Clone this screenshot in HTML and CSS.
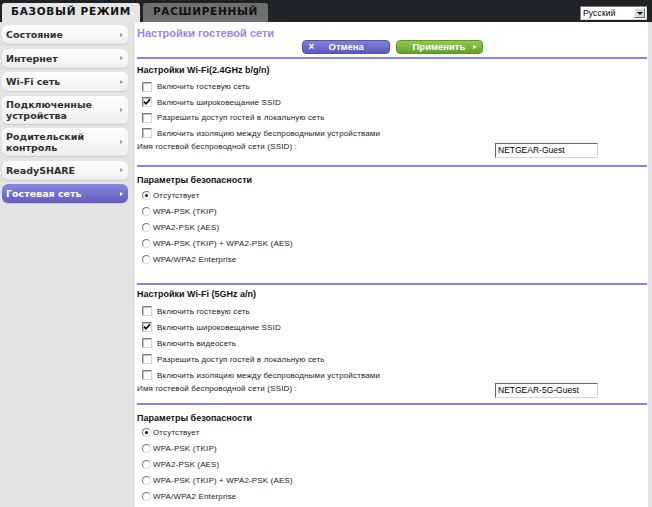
FILE: index.html
```html
<!DOCTYPE html>
<html lang="ru">
<head>
<meta charset="utf-8">
<title>Гостевая сеть</title>
<link rel="stylesheet" href="styles.css">
</head>
<body>
<header class="topbar">
  <div class="tabs">
    <div class="tab tab-active">БАЗОВЫЙ РЕЖИМ</div>
    <div class="tab">РАСШИРЕННЫЙ</div>
  </div>
  <div class="lang">
    <span class="lang-value">Русский</span>
    <span class="lang-btn"><svg width="6" height="3" viewBox="0 0 6 3"><path d="M0 0h6L3 3z" fill="#000"/></svg></span>
  </div>
</header>
<div class="layout">
  <nav class="sidebar">
    <div class="nav-item"><span>Состояние</span><span class="arrow"></span></div>
    <div class="nav-item"><span>Интернет</span><span class="arrow"></span></div>
    <div class="nav-item"><span>Wi-Fi сеть</span><span class="arrow"></span></div>
    <div class="nav-item two"><span>Подключенные<br>устройства</span><span class="arrow"></span></div>
    <div class="nav-item two"><span>Родительский<br>контроль</span><span class="arrow"></span></div>
    <div class="nav-item"><span>ReadySHARE</span><span class="arrow"></span></div>
    <div class="nav-item active"><span>Гостевая сеть</span><span class="arrow"></span></div>
  </nav>
  <main class="main">
    <div class="page-head">
      <h1 class="page-title">Настройки гостевой сети</h1>
      <div class="actions">
        <span class="btn btn-cancel"><span class="btn-x">×</span>Отмена</span>
        <span class="btn btn-apply">Применить<span class="btn-tri"></span></span>
      </div>
    </div>

    <section class="sec sec-1">
      <h2 class="sec-title">Настройки Wi-Fi(2.4GHz b/g/n)</h2>
      <div class="row"><span class="cb"></span>Включить гостевую сеть</div>
      <div class="row"><span class="cb"><svg width="8" height="8" viewBox="0 0 8 8"><path d="M1 3.6 L3 5.8 L7 1.2" fill="none" stroke="#000" stroke-width="1.6"/></svg></span>Включить широковещание SSID</div>
      <div class="row"><span class="cb"></span>Разрешить доступ гостей в локальную сеть</div>
      <div class="row"><span class="cb"></span>Включить изоляцию между беспроводными устройствами</div>
      <div class="ssid"><span class="ssid-label">Имя гостевой беспроводной сети (SSID) :</span><span class="field">NETGEAR-Guest</span></div>
    </section>

    <section class="sec sec-2">
      <h2 class="sec-title">Параметры безопасности</h2>
      <div class="row"><span class="rb on"></span>Отсутствует</div>
      <div class="row"><span class="rb"></span>WPA-PSK (TKIP)</div>
      <div class="row"><span class="rb"></span>WPA2-PSK (AES)</div>
      <div class="row"><span class="rb"></span>WPA-PSK (TKIP) + WPA2-PSK (AES)</div>
      <div class="row"><span class="rb"></span>WPA/WPA2 Enterprise</div>
    </section>

    <section class="sec sec-3">
      <h2 class="sec-title">Настройки Wi-Fi (5GHz a/n)</h2>
      <div class="row"><span class="cb"></span>Включить гостевую сеть</div>
      <div class="row"><span class="cb"><svg width="8" height="8" viewBox="0 0 8 8"><path d="M1 3.6 L3 5.8 L7 1.2" fill="none" stroke="#000" stroke-width="1.6"/></svg></span>Включить широковещание SSID</div>
      <div class="row"><span class="cb"></span>Включить видеосеть</div>
      <div class="row"><span class="cb"></span>Разрешить доступ гостей в локальную сеть</div>
      <div class="row"><span class="cb"></span>Включить изоляцию между беспроводными устройствами</div>
      <div class="ssid"><span class="ssid-label">Имя гостевой беспроводной сети (SSID) :</span><span class="field">NETGEAR-5G-Guest</span></div>
    </section>

    <section class="sec sec-4">
      <h2 class="sec-title">Параметры безопасности</h2>
      <div class="row"><span class="rb on"></span>Отсутствует</div>
      <div class="row"><span class="rb"></span>WPA-PSK (TKIP)</div>
      <div class="row"><span class="rb"></span>WPA2-PSK (AES)</div>
      <div class="row"><span class="rb"></span>WPA-PSK (TKIP) + WPA2-PSK (AES)</div>
      <div class="row"><span class="rb"></span>WPA/WPA2 Enterprise</div>
    </section>
  </main>
</div>
</body>
</html>
```

FILE: styles.css
```css
html, body {
  margin: 0;
  height: 100%;
}
body {
  background: #e4e4e4;
  font-family: "Liberation Sans", Arial, sans-serif;
  font-size: 8px;
  letter-spacing: 0.15px;
  color: #222;
  overflow: hidden;
}

/* top bar */
.topbar {
  height: 22px;
  background: #1f2326;
  display: flex;
  justify-content: space-between;
  align-items: flex-start;
}
.tabs {
  display: flex;
  gap: 3px;
  padding: 3px 0 0 2px;
}
.tab {
  width: 125px;
  height: 19px;
  box-sizing: border-box;
  border-radius: 3px 3px 0 0;
  background: #6f6f6f;
  color: #111;
  font: bold 10.5px/16px "DejaVu Sans", Verdana, sans-serif;
  letter-spacing: 0.7px;
  text-align: center;
}
.tab-active {
  width: 138px;
  background: #e6e6e6;
}
.lang {
  margin: 6px 5px 0 0;
  width: 67px;
  height: 14px;
  box-sizing: border-box;
  background: #fff;
  border: 1px solid;
  border-color: #7d7d7d #dcdcdc #dcdcdc #7d7d7d;
  display: flex;
  align-items: stretch;
}
.lang-value {
  flex: 1;
  padding-left: 2px;
  font-size: 8.5px;
  line-height: 12px;
  color: #000;
}
.lang-btn {
  width: 11px;
  margin: 1px;
  box-sizing: border-box;
  background: #d8d6d0;
  border: 1px solid;
  border-color: #f4f4f4 #6a6a6a #6a6a6a #f4f4f4;
  display: flex;
  align-items: center;
  justify-content: center;
}

/* layout */
.layout {
  display: flex;
  height: calc(100% - 22px);
}
.sidebar {
  width: 135px;
  flex: none;
  box-sizing: border-box;
  padding: 3px 7px 0 2px;
  display: flex;
  flex-direction: column;
  gap: 4.5px;
}
.nav-item {
  height: 19px;
  flex: none;
  box-sizing: border-box;
  border-radius: 6px;
  background: linear-gradient(#ffffff, #eeeeee);
  box-shadow: 0 1px 1px rgba(0, 0, 0, 0.12);
  display: flex;
  align-items: center;
  justify-content: space-between;
  padding: 0 5px 0 4px;
  font: bold 9.5px/11px "DejaVu Sans", Verdana, sans-serif;
  letter-spacing: 0;
  color: #2e2e2e;
}
.nav-item.two {
  height: 28px;
}
.nav-item.active {
  background: linear-gradient(#8a85e0, #625dbf);
  color: #fff;
}
.arrow {
  width: 0;
  height: 0;
  border-left: 3px solid #9a9a9a;
  border-top: 2.5px solid transparent;
  border-bottom: 2.5px solid transparent;
}
.nav-item.active .arrow {
  border-left-color: #fff;
}

/* main */
.main {
  flex: 1;
  background: #fff;
  margin-right: 4px;
  padding: 0 1px 0 2px;
  overflow: hidden;
}
.page-head {
  padding: 5px 0 3px;
  border-bottom: 2px solid #8482ee;
}
.page-title {
  margin: 0;
  font: bold 11px/13px "Liberation Sans", Arial, sans-serif;
  letter-spacing: 0;
  color: #8e89ea;
}
.actions {
  display: flex;
  justify-content: center;
  gap: 6px;
}
.btn {
  height: 14px;
  box-sizing: border-box;
  border-radius: 4px;
  display: flex;
  align-items: center;
  color: #fff;
  font: bold 9.5px/12px "Liberation Sans", Arial, sans-serif;
  letter-spacing: 0;
}
.btn-cancel {
  width: 88px;
  padding-left: 6px;
  background: linear-gradient(#8581dc, #5d58bb);
  border: 1px solid #5651ad;
}
.btn-x {
  width: 20px;
  font-size: 10px;
}
.btn-apply {
  width: 87px;
  padding-left: 16px;
  background: linear-gradient(#94cb4a, #64a02c);
  border: 1px solid #5f962c;
}
.btn-tri {
  margin-left: 8px;
  width: 0;
  height: 0;
  border-left: 4px solid #fff;
  border-top: 2.5px solid transparent;
  border-bottom: 2.5px solid transparent;
}

.sec {
  --row: 16px;
  border-bottom: 2px solid #8482ee;
}
.sec-1 { --row: 15.5px; padding: 4px 0 7px; }
.sec-2 { padding: 6px 0 16px; }
.sec-3 { padding: 2px 0 5px; }
.sec-4 { padding: 5.5px 0 0; border-bottom: 0; }

.sec-title {
  margin: 0;
  font: bold 9px/14px "Liberation Sans", Arial, sans-serif;
  letter-spacing: 0;
  color: #111;
}
.sec-1 .sec-title,
.sec-3 .sec-title {
  margin-bottom: 2px;
}
.row {
  height: var(--row);
  display: flex;
  align-items: center;
  padding-left: 5px;
  white-space: nowrap;
}
.cb {
  width: 10px;
  height: 10px;
  box-sizing: border-box;
  margin-right: 5px;
  background: #fff;
  border: 1px solid;
  border-color: #7c7c7c #d6d6d6 #d6d6d6 #7c7c7c;
  box-shadow: inset 1px 1px 0 #c4c4c4;
  display: flex;
  align-items: center;
  justify-content: center;
}
.rb {
  width: 9px;
  height: 9px;
  box-sizing: border-box;
  margin-right: 2px;
  border-radius: 50%;
  background: #fff;
  border: 1px solid;
  border-color: #7c7c7c #dadada #dadada #7c7c7c;
  display: flex;
  align-items: center;
  justify-content: center;
}
.rb.on::after {
  content: "";
  width: 3px;
  height: 3px;
  border-radius: 50%;
  background: #000;
}
.ssid {
  display: flex;
  align-items: flex-start;
  height: 17px;
}
.sec-3 .ssid {
  height: 15px;
}
.ssid-label {
  width: 358px;
  flex: none;
  line-height: 12px;
}
.field {
  width: 103px;
  height: 15px;
  box-sizing: border-box;
  margin-top: 2px;
  padding-left: 2px;
  border: 1px solid;
  border-color: #6a6a6a #d4d4d4 #d4d4d4 #6a6a6a;
  font-size: 8.5px;
  line-height: 13px;
  letter-spacing: 0;
  color: #000;
}
.sec-3 .field {
  margin-top: 0;
}
```
